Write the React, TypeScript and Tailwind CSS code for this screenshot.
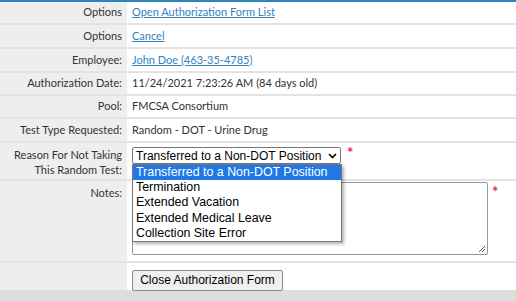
const label = "font-['Lato','Liberation_Sans',sans-serif] text-[11px] text-[#333]";
const value = "font-['Lato','Liberation_Sans',sans-serif] text-[11px] text-[#333]";
const link = "text-[#3183bf] underline";

function Row({
  title,
  h,
  children,
  top = false,
}: {
  title: React.ReactNode;
  h: string;
  children?: React.ReactNode;
  top?: boolean;
}) {
  return (
    <div className={`flex border-b-2 border-[#e3e3e3] ${h}`}>
      <div
        className={`w-[127px] shrink-0 bg-[#eeeeee] pr-[5px] flex justify-end text-right ${
          top ? "items-start pt-[4px]" : "items-center"
        } ${label}`}
      >
        {title}
      </div>
      <div className={`flex-1 pl-[5px] flex ${top ? "items-start" : "items-center"} ${value}`}>
        {children}
      </div>
    </div>
  );
}

const reasons = [
  "Transferred to a Non-DOT Position",
  "Termination",
  "Extended Vacation",
  "Extended Medical Leave",
  "Collection Site Error",
];

export default function App() {
  return (
    <div className="w-[516px] h-[301px] bg-white overflow-hidden relative">
      <div className="border-t-2 border-[#2d85b8] h-[1px]" />
      <Row title="Options" h="h-[23px]">
        <a className={link}>Open Authorization Form List</a>
      </Row>
      <Row title="Options" h="h-[24px]">
        <a className={link}>Cancel</a>
      </Row>
      <Row title="Employee:" h="h-[24px]">
        <a className={link}>John Doe (463-35-4785)</a>
      </Row>
      <Row title="Authorization Date:" h="h-[23px]">
        11/24/2021 7:23:26 AM (84 days old)
      </Row>
      <Row title="Pool:" h="h-[23px]">
        FMCSA Consortium
      </Row>
      <Row title="Test Type Requested:" h="h-[24px]">
        Random - DOT - Urine Drug
      </Row>
      <Row
        title={
          <span className="leading-[15px]">
            Reason For Not Taking
            <br />
            This Random Test:
          </span>
        }
        h="h-[38px]"
        top
      >
        <div className="mt-[4px] flex items-start">
          <div className="w-[209px] h-[17px] border border-[#767676] rounded-[2px] bg-white flex items-center justify-between pl-[3px] pr-[3px] font-['Liberation_Sans',Arial,sans-serif] text-[12px] text-black whitespace-nowrap">
            <span className="leading-none">Transferred to a Non-DOT Position</span>
            <svg width="9" height="6" viewBox="0 0 9 6" className="ml-[2px] shrink-0">
              <path d="M1 1l3.5 3.5L8 1" stroke="#000" strokeWidth="1.6" fill="none" />
            </svg>
          </div>
          <span className="ml-[6px] -mt-[2px] text-[#e8273a] text-[15px] font-bold leading-none">*</span>
        </div>
      </Row>
      <Row title="Notes:" h="h-[82px]" top>
        <div className="mt-[1px] flex items-start">
          <div className="w-[356px] h-[73px] border border-[#9a9a9a] rounded-[2px] bg-white relative">
            <svg width="8" height="8" viewBox="0 0 8 8" className="absolute right-[1px] bottom-[1px]">
              <path d="M7 1L1 7M7 4L4 7" stroke="#555" strokeWidth="1" />
            </svg>
          </div>
          <span className="ml-[4px] mt-[2px] text-[#e8273a] text-[15px] font-bold leading-none">*</span>
        </div>
      </Row>
      <div className="flex h-[27px]">
        <div className="w-[127px] shrink-0 bg-[#eeeeee]" />
        <div className="flex-1 pl-[5px] pt-[3px]">
          <button className="h-[21px] w-[151px] border border-[#8a8a8a] rounded-[2px] bg-[#efefef] font-['Liberation_Sans',Arial,sans-serif] text-[12px] text-black leading-none">
            Close Authorization Form
          </button>
        </div>
      </div>
      <div className="h-[12px] bg-[#dddddd]" />

      <div className="absolute left-[132px] top-[164px] w-[210px] border border-[#767676] bg-white shadow-[2px_2px_3px_rgba(0,0,0,0.3)] font-['Liberation_Sans',Arial,sans-serif] text-[12.4px] text-black">
        {reasons.map((r, i) => (
          <div
            key={r}
            className={`h-[15.2px] pl-[3px] leading-[15.2px] ${i === 0 ? "bg-[#1e78e6] text-white" : ""}`}
          >
            {r}
          </div>
        ))}
      </div>
    </div>
  );
}
